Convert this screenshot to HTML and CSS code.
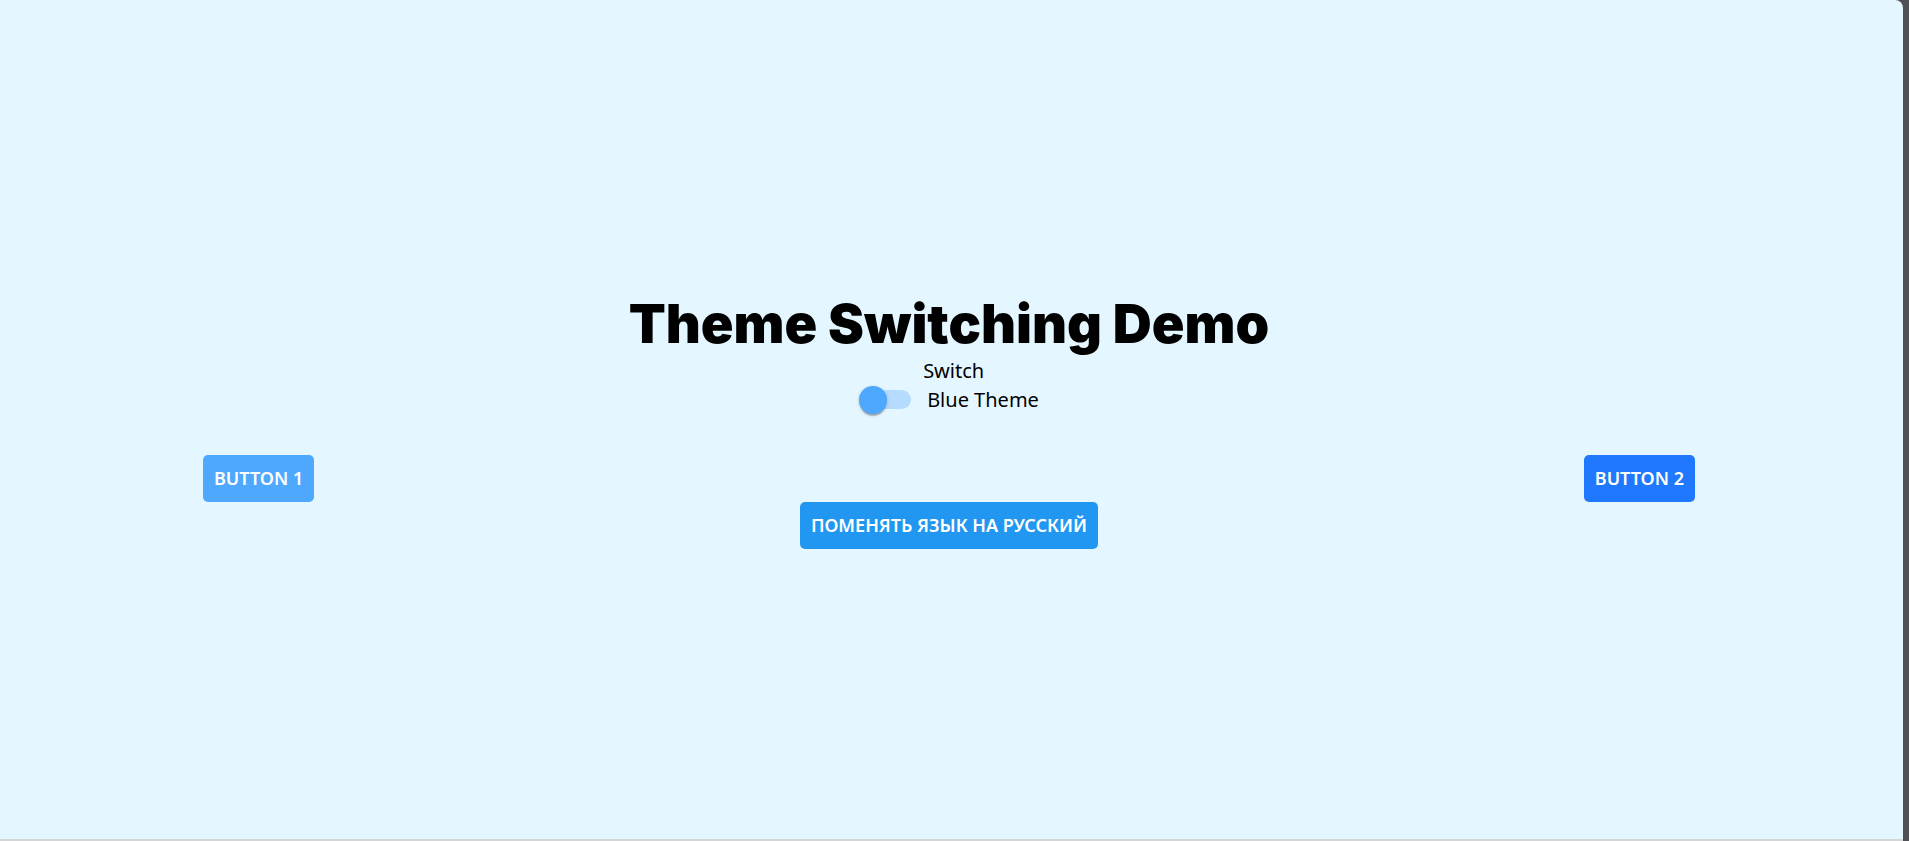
FILE: index.html
```html
<!DOCTYPE html>
<html lang="en">
<head>
<meta charset="utf-8">
<title>Theme Switching Demo</title>
<link rel="stylesheet" href="styles.css">
</head>
<body>
<div class="window">
  <main class="app">
    <h1 class="title">Theme Switching Demo</h1>
    <div class="toggle-block">
      <div class="caption">Switch</div>
      <label class="toggle-row">
        <span class="switch">
          <span class="track"></span>
          <span class="thumb"></span>
        </span>
        <span class="label">Blue Theme</span>
      </label>
    </div>
    <div class="button-row">
      <button class="btn btn-light">Button 1</button>
      <button class="btn btn-dark">Button 2</button>
    </div>
    <div class="lang-row">
      <button class="btn btn-primary">Поменять язык на русский</button>
    </div>
  </main>
</div>
</body>
</html>
```
FILE: styles.css
```css
html, body {
  margin: 0;
  padding: 0;
  height: 100%;
}
body {
  background: #4f4f56;
  overflow: hidden;
}
.window {
  width: 1903px;
  height: 839px;
  background: #e4f6ff;
  border-top-right-radius: 8px;
  border-bottom: 2px solid #d3d6d8;
}
.app {
  height: 100%;
  padding-right: 5px;
  display: flex;
  flex-direction: column;
  justify-content: center;
  font-family: "Noto Sans", "Open Sans", sans-serif;
  color: #000;
}
.title {
  margin: 0;
  text-align: center;
  font-family: Inter, "Noto Sans", sans-serif;
  font-weight: 900;
  font-size: 54px;
  line-height: 66px;
  letter-spacing: 0;
}
.toggle-block {
  align-self: center;
  margin-right: 12px;
  display: flex;
  flex-direction: column;
}
.caption {
  padding-left: 76px;
  padding-top: 2px;
  font-size: 20px;
  line-height: 24px;
}
.toggle-row {
  display: flex;
  align-items: center;
  height: 34px;
}
.switch {
  position: relative;
  width: 80px;
  height: 34px;
  flex: none;
}
.track {
  position: absolute;
  left: 17px;
  top: 7px;
  width: 47px;
  height: 19px;
  border-radius: 10px;
  background: #b5dbfe;
}
.thumb {
  position: absolute;
  left: 12px;
  top: 3px;
  width: 28px;
  height: 28px;
  border-radius: 50%;
  background: #4ea8fe;
  box-shadow: 0 3px 1px -1px rgba(0,0,0,0.2), 0 1px 2px 0 rgba(0,0,0,0.14), 0 1px 4px 0 rgba(0,0,0,0.12);
}
.label {
  font-size: 20px;
  line-height: 24px;
  padding-top: 1px;
}
.button-row {
  margin-top: 38px;
  display: flex;
  justify-content: space-between;
  padding: 0 203px;
}
.lang-row {
  display: flex;
  justify-content: center;
}
.btn {
  height: 47px;
  padding: 0 11px;
  border: none;
  border-radius: 5px;
  color: #fff;
  font-family: "Noto Sans", "Open Sans", sans-serif;
  font-weight: 600;
  font-size: 18px;
  letter-spacing: 0;
  text-transform: uppercase;
  cursor: pointer;
}
.btn-light { background: #4ea8fe; }
.btn-dark { background: #1f78fd; }
.btn-primary { background: #2297f2; }
```
